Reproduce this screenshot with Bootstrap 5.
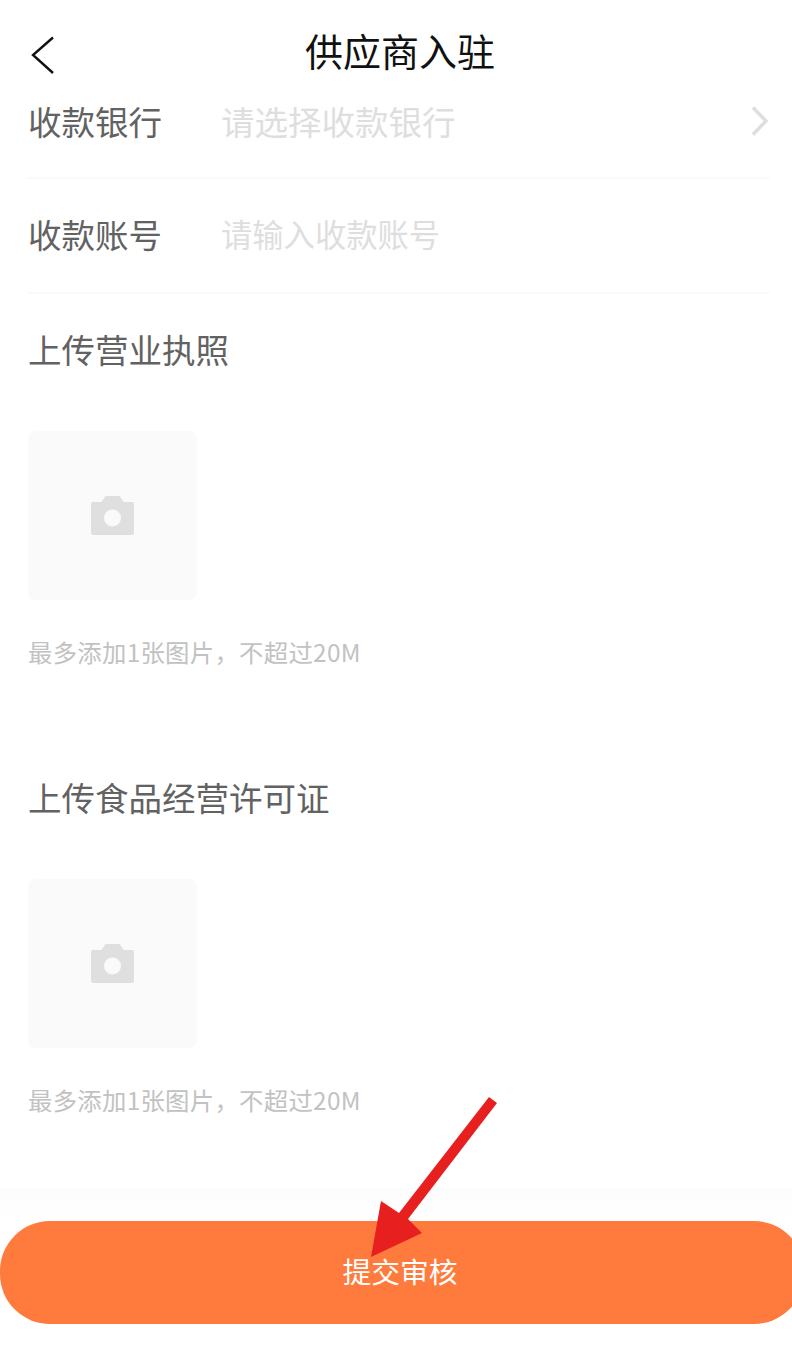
<!DOCTYPE html>
<html lang="zh">
<head>
<meta charset="utf-8">
<title>供应商入驻</title>
<link href="https://cdn.jsdelivr.net/npm/bootstrap@5.3.0/dist/css/bootstrap.min.css" rel="stylesheet">
<style>
html,body{margin:0;height:1372px;overflow:hidden;background:#fff}
body{font-family:"Noto Sans CJK SC","Liberation Sans",sans-serif;color:#626262;position:relative}
.topbar{height:104px;padding:0 20px 4px 28px;position:relative}
.topbar h1{font-size:38px;font-weight:400;color:#111;margin:0;line-height:1}
.back-ic{position:absolute;left:30px;top:36px}
.form-line{margin:0 22px 0 28px;border-bottom:2px solid #fafafa;font-size:33.5px;line-height:1}
.form-line.first{height:75px;padding-bottom:40px}
.form-line.second{height:115px;padding-bottom:3px}
.line-lbl{width:193px;flex:none;color:#626262}
.line-ph{color:#dedede}
.line-ph.narrow{font-size:31.3px}
.chev-ic{margin-right:1px}
.up-title{font-size:33.5px;line-height:1;color:#626262;margin:0 28px}
.up-box{width:169px;height:169px;background:#fafafa;border-radius:8px;margin:0 0 0 28px}
.up-hint{font-size:24.4px;line-height:1;letter-spacing:.27px;color:#c2c2c2;margin:0 28px}
.sec-a{padding-top:38px}
.sec-b{padding-top:116px}
.gap-a{margin-top:65px}
.gap-a2{margin-top:66px}
.gap-b{margin-top:40px}
.foot{position:absolute;left:0;right:0;top:1188px;height:184px;background:linear-gradient(#fcfcfc,#fff 30px)}
.submit-btn{display:block;width:804px;height:103px;margin-top:33px;border:0;border-radius:50px;background:#ff7a3d;color:#fff;font-size:28.8px;line-height:1;padding:0 4px 2px 0}
.mark-arrow{position:absolute;left:0;top:0;pointer-events:none}
</style>
</head>
<body>
<header class="topbar d-flex align-items-center justify-content-center">
  <svg class="back-ic" width="26" height="38" viewBox="0 0 26 38" fill="none" stroke="#111" stroke-width="2.4"><path d="M23 1.500 3 19l20 18"/></svg>
  <h1>供应商入驻</h1>
</header>
<div class="form-line first d-flex align-items-center">
  <span class="line-lbl">收款银行</span>
  <span class="line-ph flex-grow-1">请选择收款银行</span>
  <svg class="chev-ic" width="18" height="30" viewBox="0 0 18 30" fill="none" stroke="#dedede" stroke-width="3.500"><path d="M2 1.500 15 15 2 28.500"/></svg>
</div>
<div class="form-line second d-flex align-items-center">
  <span class="line-lbl">收款账号</span>
  <span class="line-ph narrow">请输入收款账号</span>
</div>
<section class="sec-a">
  <p class="up-title mb-0">上传营业执照</p>
  <div class="up-box gap-a d-flex align-items-center justify-content-center">
    <svg width="43" height="39" viewBox="0 0 43 39"><path fill="#dfdfdf" fill-rule="evenodd" d="M2 6h8.500l4-6h14l4 6H41a2 2 0 0 1 2 2v29a2 2 0 0 1-2 2H2a2 2 0 0 1-2-2V8a2 2 0 0 1 2-2Zm19.500 7.500a8.500 8.500 0 1 0 0 17 8.500 8.500 0 0 0 0-17Z"/></svg>
  </div>
  <p class="up-hint gap-b mb-0">最多添加1张图片，不超过20M</p>
</section>
<section class="sec-b">
  <p class="up-title mb-0">上传食品经营许可证</p>
  <div class="up-box gap-a2 d-flex align-items-center justify-content-center">
    <svg width="43" height="39" viewBox="0 0 43 39"><path fill="#dfdfdf" fill-rule="evenodd" d="M2 6h8.500l4-6h14l4 6H41a2 2 0 0 1 2 2v29a2 2 0 0 1-2 2H2a2 2 0 0 1-2-2V8a2 2 0 0 1 2-2Zm19.500 7.500a8.500 8.500 0 1 0 0 17 8.500 8.500 0 0 0 0-17Z"/></svg>
  </div>
  <p class="up-hint gap-b mb-0">最多添加1张图片，不超过20M</p>
</section>
<footer class="foot">
  <button type="button" class="btn submit-btn">提交审核</button>
</footer>
<svg class="mark-arrow" width="792" height="1372" viewBox="0 0 792 1372"><polygon fill="#e71f1f" points="489,1097 497,1103 408,1219 422,1233 371,1257 381,1201 399,1213"/></svg>
</body>
</html>
